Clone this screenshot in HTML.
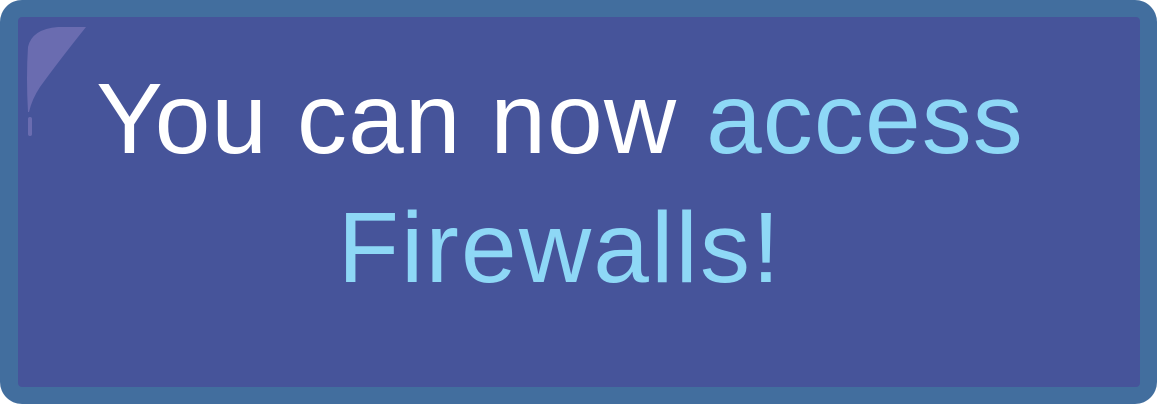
<!DOCTYPE html>
<html><head><style>
body{margin:0;width:1157px;height:404px;overflow:hidden;background:#fff;}
.o{position:absolute;left:0;top:0;width:1157px;height:404px;background:#426e9e;border-radius:22px;}
.i{position:absolute;left:18px;top:17px;width:1122px;height:370px;background:#46549a;border-radius:4px;}
.t{position:absolute;left:0;width:1122px;text-align:center;font-family:"Liberation Sans",sans-serif;font-size:100px;color:#fff;white-space:nowrap;line-height:1;}
.b{color:#8ed8f6;}
</style></head><body>
<div class="o"></div>
<div class="i">
<svg style="position:absolute;left:0;top:0" width="100" height="130">
<path d="M10 95 Q8 60 10 30 Q14 12 40 10 L68 10 Q40 45 22 70 Q14 82 11 95 Z" fill="#6a6cb0"/>
<rect x="10" y="100" width="4" height="19" rx="2" fill="#6a6cb0"/>
</svg>
<div class="t" style="top:52px;left:-19px;letter-spacing:1.1px">You can now <span class="b">access</span></div>
<div class="t b" style="top:181px;left:-19px;letter-spacing:2.2px">Firewalls!</div>
</div>
</body></html>
